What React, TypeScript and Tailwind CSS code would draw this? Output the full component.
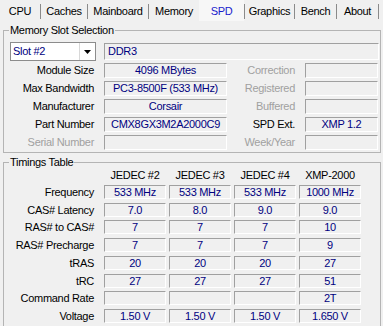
import React from "react";

const boxCls =
  "flex items-center justify-center border border-t-[#a0a0a0] border-l-[#a0a0a0] border-b-white border-r-white bg-[#f0f0f0] text-[#000080] leading-none whitespace-nowrap overflow-hidden";

function Sep() {
  return <div className="self-start mt-[4px] w-px h-[15px] bg-[#8a8a8a]" />;
}

function Tab({ label, w, selected }: { label: string; w: string; selected?: boolean }) {
  return (
    <div
      className={`${w} h-[21px] flex items-center justify-center pt-[2px] ${
        selected ? "bg-[#f7f7f7] text-[#1a1acd]" : ""
      }`}
    >
      {label}
    </div>
  );
}

const topRows = [
  { l: "Module Size", v: "4096 MBytes", rl: "Correction", rv: "", lDis: false, rlDis: true },
  { l: "Max Bandwidth", v: "PC3-8500F (533 MHz)", rl: "Registered", rv: "", lDis: false, rlDis: true },
  { l: "Manufacturer", v: "Corsair", rl: "Buffered", rv: "", lDis: false, rlDis: true },
  { l: "Part Number", v: "CMX8GX3M2A2000C9", rl: "SPD Ext.", rv: "XMP 1.2", lDis: false, rlDis: false },
  { l: "Serial Number", v: "", rl: "Week/Year", rv: "", lDis: true, rlDis: true },
];

const headers = ["JEDEC #2", "JEDEC #3", "JEDEC #4", "XMP-2000"];

const timingRows = [
  { l: "Frequency", v: ["533 MHz", "533 MHz", "533 MHz", "1000 MHz"], mt: "mt-[4px]" },
  { l: "CAS# Latency", v: ["7.0", "8.0", "9.0", "9.0"], mt: "mt-[4px]" },
  { l: "RAS# to CAS#", v: ["7", "7", "7", "10"], mt: "mt-[3px]" },
  { l: "RAS# Precharge", v: ["7", "7", "7", "9"], mt: "mt-[4px]" },
  { l: "tRAS", v: ["20", "20", "20", "27"], mt: "mt-[4px]" },
  { l: "tRC", v: ["27", "27", "27", "51"], mt: "mt-[4px]" },
  { l: "Command Rate", v: ["", "", "", "2T"], mt: "mt-[3px]" },
  { l: "Voltage", v: ["1.50 V", "1.50 V", "1.50 V", "1.650 V"], mt: "mt-[4px]" },
];

export default function App() {
  return (
    <div className="w-[383px] h-[326px] overflow-hidden bg-[#f0f0f0] font-['Liberation_Sans',Arial,sans-serif] text-[11px] tracking-[-0.3px] text-black">
      {/* Tabs */}
      <div className="flex h-[21px]">
        <Tab label="CPU" w="w-[40px]" />
        <Sep />
        <Tab label="Caches" w="w-[46px]" />
        <Sep />
        <Tab label="Mainboard" w="w-[60px]" />
        <Sep />
        <Tab label="Memory" w="w-[50px]" />
        <Tab label="SPD" w="w-[45px]" selected />
        <Sep />
        <Tab label="Graphics" w="w-[49px]" />
        <Sep />
        <Tab label="Bench" w="w-[41px]" />
        <Sep />
        <Tab label="About" w="w-[41px]" />
        <Sep />
      </div>

      {/* Memory Slot Selection */}
      <fieldset className="ml-[3px] mt-[2px] w-[378px] border border-[#b4b4b4]">
        <legend className="ml-[5px] px-[1px] leading-[14px]">Memory Slot Selection</legend>
        <div className="pt-[5px] pb-[2px]">
          <div className="flex items-center h-[19px] pl-[6px] pr-[1px]">
            <div className="w-[86px] h-[19px] bg-white border border-[#8c8c8c] flex items-center">
              <span className="flex-1 pl-[2px] text-[#000080] leading-none">Slot #2</span>
              <div className="w-[16px] h-full border-l border-[#d8d8d8] flex items-center justify-center">
                <svg width="7" height="4" viewBox="0 0 7 4">
                  <path d="M0 0H7L3.5 4Z" fill="#000" />
                </svg>
              </div>
            </div>
            <div className={`${boxCls} ml-[8px] flex-1 h-[17px] !justify-start pl-[3px]`}>DDR3</div>
          </div>
          <div className="flex flex-col gap-[3px] mt-[2px]">
            {topRows.map((r) => (
              <div key={r.l} className="flex items-center h-[15px]">
                <div className={`w-[90px] text-right leading-none ${r.lDis ? "text-[#a0a0a0]" : ""}`}>{r.l}</div>
                <div className={`${boxCls} ml-[10px] w-[123px] h-[15px]`}>{r.v}</div>
                <div className={`w-[68px] text-right leading-none ${r.rlDis ? "text-[#a0a0a0]" : ""}`}>{r.rl}</div>
                <div className={`${boxCls} ml-[10px] w-[73px] h-[15px]`}>{r.rv}</div>
              </div>
            ))}
          </div>
        </div>
      </fieldset>

      {/* Timings Table */}
      <fieldset className="ml-[3px] mt-[2px] w-[378px] border border-[#b4b4b4]">
        <legend className="ml-[5px] px-[1px] leading-[14px]">Timings Table</legend>
        <div className="pb-[3px]">
          <div className="flex items-center h-[12px]">
            <div className="w-[100px]" />
            <div className="flex gap-[3px]">
              {headers.map((h) => (
                <div key={h} className="w-[62px] text-center leading-none">
                  {h}
                </div>
              ))}
            </div>
          </div>
          {timingRows.map((r) => (
            <div key={r.l} className={`flex items-center h-[14px] ${r.mt}`}>
              <div className="w-[90px] text-right leading-none">{r.l}</div>
              <div className="ml-[10px] flex gap-[3px]">
                {r.v.map((v, i) => (
                  <div key={i} className={`${boxCls} w-[62px] h-[14px]`}>
                    {v}
                  </div>
                ))}
              </div>
            </div>
          ))}
        </div>
      </fieldset>
    </div>
  );
}
